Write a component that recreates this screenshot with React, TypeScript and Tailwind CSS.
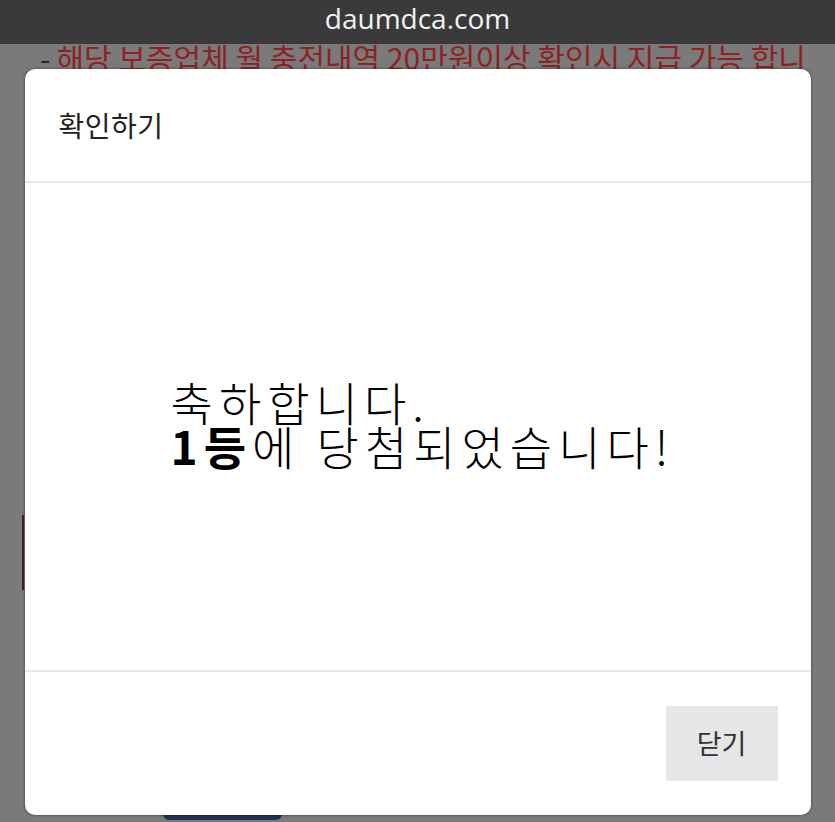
const kr = "font-['Noto_Sans_CJK_KR','Noto_Sans',sans-serif]";

export default function App() {
  return (
    <main className={`relative h-[822px] w-full overflow-hidden bg-[#7a7a7a] ${kr}`}>
      {/* browser address bar */}
      <header className="flex h-[44px] justify-center bg-[#3a3a3c] pt-[2px] font-['Open_Sans',sans-serif] text-[28px] leading-[32px] text-[#f2f2f2]">
        daumdca.com
      </header>

      {/* page content, dimmed behind the dialog */}
      <section className="flex flex-col">
        <p className="h-[26px] w-[822px] break-all pl-[40px] text-[30px] leading-[26px]">
          <span className="mr-[6px] text-[#2a2a2a]">-</span>
          <span className="text-[#8e2222]">해당 보증업체 월 충전내역 20만원이상 확인시 지급 가능 합니다</span>
        </p>
        <div className="mt-[445px] ml-[22px] h-[75px] border-l-2 border-[#4a1c1c]" />
        <div className="mt-[170px] ml-[163px] h-[60px] w-[119px] rounded-md bg-[#1e3350]" />
      </section>

      <ConfirmDialog />
    </main>
  );
}

function ConfirmDialog() {
  return (
    <div className="absolute inset-0 flex justify-center pt-[69px]">
      <div className="flex h-[746px] w-[786px] flex-col rounded-[10px] bg-white shadow-[0_0_3px_rgba(0,0,0,0.55)]">
        <div className="flex h-[112px] items-center px-[34px] text-[28px] tracking-[0.5px] text-[#222]">확인하기</div>
        <div className="flex flex-1 items-center justify-center border-y-2 border-[#e8e8e8]">
          <div className="-mt-[8px] pl-[10px] text-left text-[46px] font-light leading-[44px] tracking-[6px] text-black">
            축하합니다.
            <br />
            <b className="font-bold">1등</b>에 당첨되었습니다!
          </div>
        </div>
        <div className="flex h-[143px] items-center justify-end px-[33px]">
          <button className="h-[75px] w-[112px] bg-[#e6e6e8] text-[27px] text-[#333]">닫기</button>
        </div>
      </div>
    </div>
  );
}
